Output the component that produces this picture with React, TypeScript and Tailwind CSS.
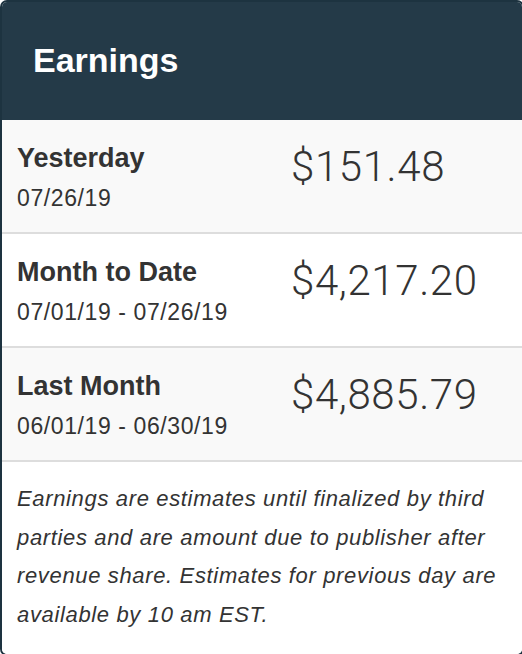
const rows = [
  { label: 'Yesterday', range: '07/26/19', amount: '$151.48', shade: true },
  { label: 'Month to Date', range: '07/01/19 - 07/26/19', amount: '$4,217.20', shade: false },
  { label: 'Last Month', range: '06/01/19 - 06/30/19', amount: '$4,885.79', shade: true },
];

export default function App() {
  return (
    <div className="w-[522px] h-[654px] overflow-hidden bg-white">
      <div className="w-[524px] h-[656px] border-2 border-[#1d3340] rounded-[7px] overflow-hidden flex flex-col font-['Liberation_Sans',Arial,sans-serif] text-[#333]">
        {/* Header */}
        <div className="h-[118px] shrink-0 bg-[#243a48] pt-[38px] px-[31px]">
          <h1 className="text-[34px] leading-[40px] font-bold text-white">Earnings</h1>
        </div>

        {rows.map((row) => (
          <div
            key={row.label}
            className={`h-[114px] shrink-0 border-b-2 border-[#dddddd] flex pt-[22px] ${row.shade ? 'bg-[#f9f9f9]' : 'bg-white'}`}
          >
            <div className="w-[289px] pl-[15px]">
              <div className="text-[27px] leading-[32px] font-bold">{row.label}</div>
              <div className="mt-[10px] text-[23px] leading-[28px] tracking-[0.6px]">{row.range}</div>
            </div>
            <div className="font-['Roboto',sans-serif] font-light text-[42px] leading-[50px] tracking-[0.6px] text-[#333]">
              {row.amount}
            </div>
          </div>
        ))}

        {/* Footnote */}
        <div className="flex-1 bg-white px-[15px] pt-[18px]">
          <p className="italic text-[22px] leading-[38.5px] tracking-[0.65px]">
            Earnings are estimates until finalized by third parties and are amount due to publisher after revenue
            share. Estimates for previous day are available by 10 am EST.
          </p>
        </div>
      </div>
    </div>
  );
}
